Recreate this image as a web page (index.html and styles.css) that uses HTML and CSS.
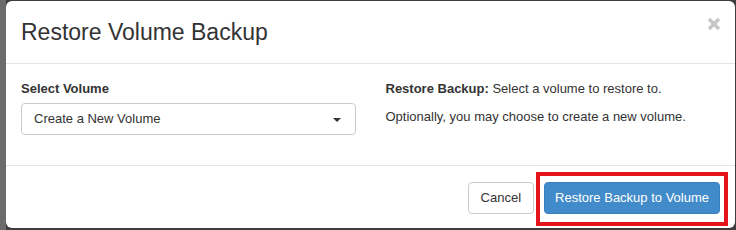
FILE: index.html
```html
<!DOCTYPE html>
<html>
<head>
<meta charset="utf-8">
<link rel="stylesheet" href="styles.css">
</head>
<body>
<div class="modal">
  <div class="modal-header">
    <h3 class="modal-title">Restore Volume Backup</h3>
    <button class="close" aria-label="Close">
      <svg width="14" height="14" viewBox="0 0 14 14"><path d="M2 2 L12 12 M12 2 L2 12" stroke="#c6c6c6" stroke-width="3.4" stroke-linecap="butt"/></svg>
    </button>
  </div>
  <div class="modal-body">
    <div class="col">
      <label class="label">Select Volume</label>
      <div class="select">
        <span>Create a New Volume</span>
        <span class="caret"></span>
      </div>
    </div>
    <div class="col help">
      <p><strong>Restore Backup:</strong> Select a volume to restore to.</p>
      <p>Optionally, you may choose to create a new volume.</p>
    </div>
  </div>
  <div class="modal-footer">
    <button class="btn">Cancel</button>
    <button class="btn btn-primary highlighted">Restore Backup to Volume</button>
  </div>
</div>
</body>
</html>
```

FILE: styles.css
```css
html, body {
  margin: 0;
  padding: 0;
}
body {
  width: 736px;
  height: 230px;
  overflow: hidden;
  background: linear-gradient(to right, #6b6b6b 6px, #3e3e3e 6px);
  font-family: "Liberation Sans", Arial, sans-serif;
  font-size: 13px;
  color: #333;
}
.modal {
  margin: 1px 0 0 6px;
  width: 729px;
  height: 227px;
  background: #fff;
  border-radius: 6px;
  display: flex;
  flex-direction: column;
}
.modal-header {
  padding: 15px 15px 0 15px;
  height: 47px;
  border-bottom: 1px solid #e5e5e5;
  display: flex;
  justify-content: space-between;
  align-items: flex-start;
}
.modal-title {
  margin: 0;
  font-size: 23px;
  font-weight: normal;
  line-height: 32px;
  color: #333;
}
.close {
  border: 0;
  background: none;
  padding: 0;
  margin-top: 1px;
  margin-right: -1px;
  width: 14px;
  height: 14px;
  display: block;
}
.close svg {
  display: block;
}
.modal-body {
  padding: 15px 15px 0 15px;
  height: 86px;
  border-bottom: 1px solid #e5e5e5;
  display: grid;
  grid-template-columns: 1fr 1fr;
  column-gap: 30px;
}
.label {
  display: block;
  font-weight: bold;
  line-height: 20px;
  margin-bottom: 4px;
}
.select {
  height: 30px;
  border: 1px solid #ccc;
  border-radius: 4px;
  padding: 0 14px 0 12px;
  display: flex;
  align-items: center;
  justify-content: space-between;
  line-height: 18px;
}
.caret {
  width: 0;
  height: 0;
  border-left: 4px solid transparent;
  border-right: 4px solid transparent;
  border-top: 4px solid #333;
  margin-top: 1px;
}
.help p {
  margin: 0 0 8px 0;
  line-height: 20px;
}
.modal-footer {
  padding: 16px 15px 0 15px;
  display: flex;
  justify-content: flex-end;
  gap: 10px;
}
.btn {
  font-family: "Liberation Sans", Arial, sans-serif;
  font-size: 13px;
  height: 32px;
  padding: 0 12px;
  border: 1px solid #ccc;
  border-radius: 4px;
  background: #fff;
  color: #333;
  line-height: 18px;
}
.btn-primary {
  padding: 0 10px;
  background: #428bca;
  border-color: #3a80bf;
  color: #fff;
}
.highlighted {
  position: relative;
}
.highlighted::after {
  content: "";
  position: absolute;
  left: -9px;
  right: -9px;
  top: -11px;
  bottom: -13px;
  border: 4px solid #e3141c;
}
```
